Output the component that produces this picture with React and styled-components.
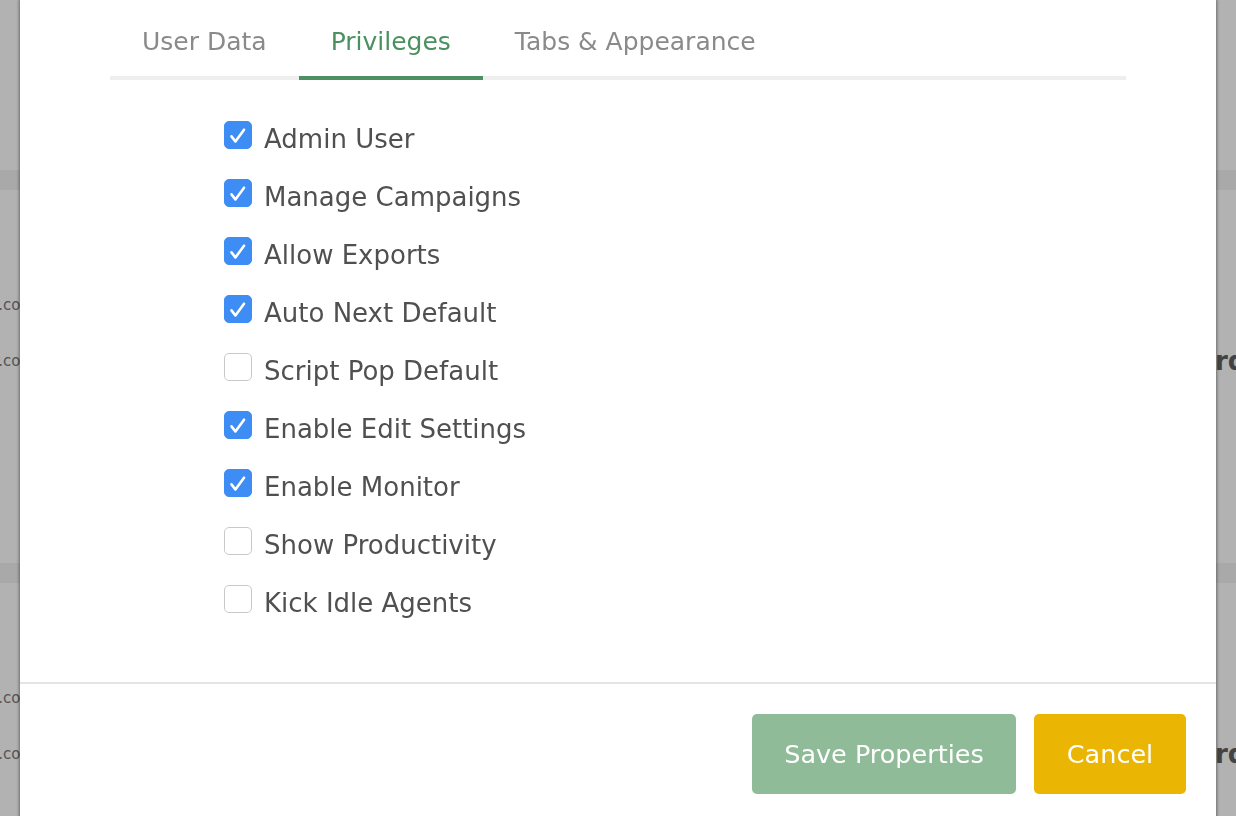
import styled, { createGlobalStyle } from "styled-components";
import { useState } from "react";

const GlobalStyle = createGlobalStyle`
  html, body {
    margin: 0;
    padding: 0;
    overflow: hidden;
  }
  body {
    font-family: "DejaVu Sans", "Liberation Sans", sans-serif;
    background: #fff;
  }
`;

// page behind the modal
const Page = styled.div`
  width: 1236px;
  height: 816px;
  background: #fff;
`;

const PageHeader = styled.div`
  height: 170px;
`;

const Band = styled.div`
  height: 20px;
  background: #f2f2f2;
`;

const Spacer = styled.div`
  height: ${(p) => p.h}px;
`;

const TableRow = styled.div`
  height: 56px;
  display: flex;
  align-items: center;
`;

const LeftCell = styled.div`
  width: 35px;
  overflow: hidden;
  display: flex;
  justify-content: flex-end;
  white-space: nowrap;
  font-size: 15px;
  color: #7a7a7a;
`;

const RightCell = styled.div`
  margin-left: auto;
  width: 110px;
  overflow: hidden;
  white-space: nowrap;
  font-size: 26px;
  font-weight: bold;
  color: #616161;
`;

// modal
const Overlay = styled.div`
  position: fixed;
  inset: 0;
  background: rgba(0, 0, 0, 0.3);
  display: flex;
  justify-content: center;
  align-items: flex-start;
  overflow: hidden;
`;

const Modal = styled.div`
  width: 1196px;
  background: #fff;
  box-shadow: 0 0 3px 1px rgba(0, 0, 0, 0.4);
`;

const TabBar = styled.div`
  margin: 0 90px;
  display: flex;
  border-bottom: 4px solid #eeeeee;
`;

const Tab = styled.div`
  height: 80px;
  box-sizing: border-box;
  padding: 6px 32px 0;
  display: flex;
  align-items: center;
  font-size: 25px;
  color: ${(p) => (p.active ? "#4b9160" : "#8a8a8a")};
  border-bottom: 4px solid ${(p) => (p.active ? "#4b9062" : "transparent")};
  margin-bottom: -4px;
  cursor: pointer;
`;

const Body = styled.div`
  padding: 30px 0 50px 204px;
`;

const Row = styled.label`
  height: 58px;
  display: flex;
  align-items: center;
  gap: 12px;
  cursor: pointer;
`;

const Box = styled.span`
  width: 28px;
  height: 28px;
  box-sizing: border-box;
  margin-bottom: 8px;
  border-radius: 5px;
  display: flex;
  align-items: center;
  justify-content: center;
  background: ${(p) => (p.checked ? "#3d8df5" : "#fff")};
  border: 1px solid ${(p) => (p.checked ? "#3d8df5" : "#c9c9c9")};
`;

const Label = styled.span`
  font-size: 26px;
  color: #505050;
`;

const Footer = styled.div`
  border-top: 2px solid #e4e4e4;
  padding: 30px 30px 30px 0;
  display: flex;
  justify-content: flex-end;
  gap: 18px;
`;

const Button = styled.button`
  height: 80px;
  padding: 0 32px;
  min-width: ${(p) => p.w}px;
  border: none;
  border-radius: 5px;
  background: ${(p) => p.bg};
  color: #fff;
  font-family: inherit;
  font-size: 25.5px;
  cursor: pointer;
`;

const privileges = [
  ["Admin User", true],
  ["Manage Campaigns", true],
  ["Allow Exports", true],
  ["Auto Next Default", true],
  ["Script Pop Default", false],
  ["Enable Edit Settings", true],
  ["Enable Monitor", true],
  ["Show Productivity", false],
  ["Kick Idle Agents", false],
];

const Check = () => (
  <svg width="28" height="28" viewBox="0 0 28 28">
    <polyline
      points="7,15.5 11.2,21 20.5,8.3"
      fill="none"
      stroke="#fff"
      strokeWidth="2.8"
      strokeLinecap="round"
      strokeLinejoin="round"
    />
  </svg>
);

const Group = ({ hasRight }) => (
  <>
    <Band />
    <Spacer h={87} />
    <TableRow>
      <LeftCell>agent@dialer.com</LeftCell>
    </TableRow>
    <TableRow>
      <LeftCell>agent@dialer.com</LeftCell>
      {hasRight && <RightCell>Forward</RightCell>}
    </TableRow>
    <Spacer h={174} />
  </>
);

const App = () => {
  const [values, setValues] = useState(privileges.map((p) => p[1]));
  const toggle = (i) =>
    setValues((v) => v.map((x, j) => (j === i ? !x : x)));

  return (
    <>
      <GlobalStyle />
      <Page>
        <PageHeader />
        <Group hasRight />
        <Group hasRight />
      </Page>
      <Overlay>
        <Modal>
          <TabBar>
            <Tab>User Data</Tab>
            <Tab active>Privileges</Tab>
            <Tab>Tabs &amp; Appearance</Tab>
          </TabBar>
          <Body>
            {privileges.map(([name], i) => (
              <Row key={name} onClick={() => toggle(i)}>
                <Box checked={values[i]}>{values[i] && <Check />}</Box>
                <Label>{name}</Label>
              </Row>
            ))}
          </Body>
          <Footer>
            <Button bg="#8fbb99" w={264}>Save Properties</Button>
            <Button bg="#ebb504" w={152}>Cancel</Button>
          </Footer>
        </Modal>
      </Overlay>
    </>
  );
};

export default App;
